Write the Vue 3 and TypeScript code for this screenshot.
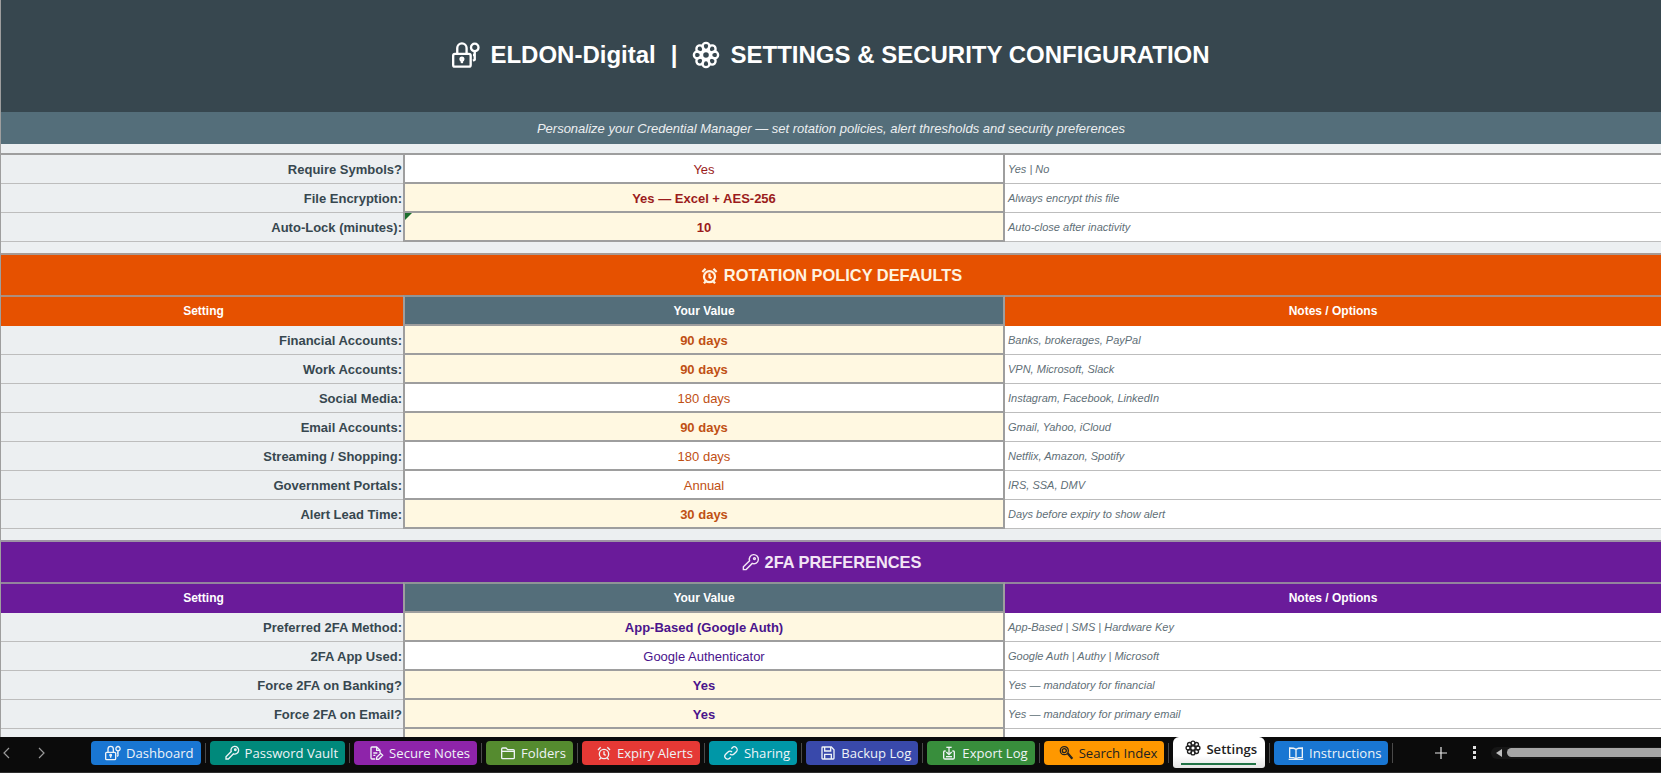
<template>
  <div class="app">
    <div class="sheet">
      <header class="title-bar">
        <svg class="title-icon" viewBox="0 0 24 24"><path v-for="d in icons.lockKey" :key="d" :d="d" /></svg>
        <span>ELDON-Digital</span>
        <span class="pipe">|</span>
        <svg class="title-icon" viewBox="0 0 24 24"><path v-for="d in icons.gear" :key="d" :d="d" /></svg>
        <span>SETTINGS &amp; SECURITY CONFIGURATION</span>
      </header>
      <div class="sub-bar">Personalize your Credential Manager — set rotation policies, alert thresholds and security preferences</div>

      <section v-for="section in sections" :key="section.id" class="section" :class="section.id">
        <div v-if="section.title" class="banner">
          <svg class="banner-icon" viewBox="0 0 24 24"><path v-for="d in icons[section.icon]" :key="d" :d="d" /></svg>
          <span>{{ section.title }}</span>
        </div>
        <div v-if="section.title" class="row head">
          <div class="cell">Setting</div>
          <div class="cell mid">Your Value</div>
          <div class="cell">Notes / Options</div>
        </div>
        <div v-for="row in section.rows" :key="row.label" class="row">
          <div class="cell label">{{ row.label }}</div>
          <div class="cell value" :class="{ filled: row.filled }">
            <i v-if="row.comment" class="comment"></i>{{ row.value }}
          </div>
          <div class="cell note">{{ row.note }}</div>
        </div>
      </section>
    </div>

    <footer class="tabs">
      <svg class="nav first" viewBox="0 0 10 14"><path d="M7 2 2 7l5 5" /></svg>
      <svg class="nav" viewBox="0 0 10 14"><path d="M3 2l5 5-5 5" /></svg>
      <div class="tab-list">
        <template v-for="tab in tabs" :key="tab.name">
          <div class="tab" :class="[tab.cls, { active: tab.active }]">
            <svg class="tab-icon" viewBox="0 0 24 24"><path v-for="d in icons[tab.icon]" :key="d" :d="d" /></svg>
            <span>{{ tab.name }}</span>
          </div>
          <i class="sep"></i>
        </template>
      </div>
      <svg class="plus" viewBox="0 0 14 14"><path d="M7 1v12M1 7h12" /></svg>
      <div class="kebab"><i></i><i></i><i></i></div>
      <div class="scroller">
        <b></b>
        <span></span>
      </div>
    </footer>
  </div>
</template>

<script setup lang="ts">
interface Row {
  label: string
  value: string
  note: string
  filled?: boolean
  comment?: boolean
}

// draws a circle as a path so every icon is just a list of d strings
const ring = (cx: number, cy: number, r: number) =>
  `M${cx - r} ${cy}a${r} ${r} 0 1 0 ${r * 2} 0a${r} ${r} 0 1 0 ${-r * 2} 0`

const petals = [0, 45, 90, 135, 180, 225, 270, 315].map((deg) => {
  const a = (deg * Math.PI) / 180
  return ring(+(12 + 7.4 * Math.cos(a)).toFixed(2), +(12 + 7.4 * Math.sin(a)).toFixed(2), 3)
})

const icons: Record<string, string[]> = {
  lockKey: [
    'M2.500 11h12a1.500 1.500 0 0 1 1.500 1.500v8a1.500 1.500 0 0 1-1.500 1.500h-12a1.500 1.500 0 0 1-1.500-1.500v-8A1.500 1.500 0 0 1 2.500 11z',
    'M4.500 11V6a4 4 0 0 1 8 0v5',
    ring(8.500, 15.500, 1.2),
    'M8.500 16.500v2.500',
    ring(19.500, 5.500, 3.200),
    'M19.500 8.700v7.300l-1.500 1M19.500 12H18',
  ],
  gear: [...petals, ring(12, 12, 3.400)],
  alarm: [
    ring(12, 13.500, 7),
    'M12 9.500v4.500l2.500 1.500',
    'M3 7.500 7 3.500',
    'M21 7.500 17 3.500',
    'M7 19.500 5 22',
    'M17 19.500l2 2.500',
  ],
  key: [
    'M10.800 9.800A5.760 5.760 0 1 1 14.200 13.200L6.500 21H3V17.500Z',
    ring(17, 7, 1.200),
  ],
  note: [
    'M11 21H6a1.500 1.500 0 0 1-1.500-1.500v-15A1.500 1.500 0 0 1 6 3h7l5 5v4',
    'M13 3v5h5',
    'M8 12h6M8 15.500h3',
    'M13 21.500v-3l6-6 3 3-6 6z',
  ],
  folder: [
    'M2.500 19V6a1.500 1.500 0 0 1 1.500-1.500h5L11.500 7H20a1.500 1.500 0 0 1 1.500 1.500V19a1.500 1.500 0 0 1-1.500 1.500H4A1.500 1.500 0 0 1 2.500 19z',
    'M2.500 9.500h19',
  ],
  link: [
    'M10.500 13.500a4 4 0 0 0 6 0l3.500-3.500a4.200 4.200 0 0 0-6-6l-1.500 1.500',
    'M13.500 10.500a4 4 0 0 0-6 0L4 14a4.200 4.200 0 0 0 6 6l1.500-1.500',
  ],
  floppy: [
    'M4 3h13l4 4v13a1 1 0 0 1-1 1H4a1 1 0 0 1-1-1V4a1 1 0 0 1 1-1z',
    'M7 3v6h9V3',
    'M7 21v-7h10v7',
  ],
  tray: [
    'M7 9H5.500A1.500 1.500 0 0 0 4 10.500V19a2 2 0 0 0 2 2h12a2 2 0 0 0 2-2v-8.500A1.500 1.500 0 0 0 18.500 9H17',
    'M12 3v11',
    'M8 10.500l4 4 4-4',
    'M8 3.500h8',
    'M7.500 17.500h9',
  ],
  search: [ring(9.500, 8.500, 6), ring(9.500, 8.500, 3), 'M14 13l7 8', 'M15 12l7 8'],
  book: [
    'M12 6.500C10 5 7 4.500 2.500 4.500V18.500C7 18.500 10 19 12 20.500C14 19 17 18.500 21.500 18.500V4.500C17 4.500 14 5 12 6.500z',
    'M12 6.500v14',
    'M1 21.500h22',
  ],
}

const sections: { id: string; title?: string; icon: string; rows: Row[] }[] = [
  {
    id: 'top',
    icon: '',
    rows: [
      { label: 'Require Symbols?', value: 'Yes', note: 'Yes | No' },
      { label: 'File Encryption:', value: 'Yes — Excel + AES-256', note: 'Always encrypt this file', filled: true },
      { label: 'Auto-Lock (minutes):', value: '10', note: 'Auto-close after inactivity', filled: true, comment: true },
    ],
  },
  {
    id: 'rotation',
    title: 'ROTATION POLICY DEFAULTS',
    icon: 'alarm',
    rows: [
      { label: 'Financial Accounts:', value: '90 days', note: 'Banks, brokerages, PayPal', filled: true },
      { label: 'Work Accounts:', value: '90 days', note: 'VPN, Microsoft, Slack', filled: true },
      { label: 'Social Media:', value: '180 days', note: 'Instagram, Facebook, LinkedIn' },
      { label: 'Email Accounts:', value: '90 days', note: 'Gmail, Yahoo, iCloud', filled: true },
      { label: 'Streaming / Shopping:', value: '180 days', note: 'Netflix, Amazon, Spotify' },
      { label: 'Government Portals:', value: 'Annual', note: 'IRS, SSA, DMV' },
      { label: 'Alert Lead Time:', value: '30 days', note: 'Days before expiry to show alert', filled: true },
    ],
  },
  {
    id: 'twofa',
    title: '2FA PREFERENCES',
    icon: 'key',
    rows: [
      { label: 'Preferred 2FA Method:', value: 'App-Based (Google Auth)', note: 'App-Based | SMS | Hardware Key', filled: true },
      { label: '2FA App Used:', value: 'Google Authenticator', note: 'Google Auth | Authy | Microsoft' },
      { label: 'Force 2FA on Banking?', value: 'Yes', note: 'Yes — mandatory for financial', filled: true },
      { label: 'Force 2FA on Email?', value: 'Yes', note: 'Yes — mandatory for primary email', filled: true },
      { label: '', value: '', note: '', filled: true },
    ],
  },
]

const tabs = [
  { name: 'Dashboard', icon: 'lockKey', cls: 'blue' },
  { name: 'Password Vault', icon: 'key', cls: 'teal' },
  { name: 'Secure Notes', icon: 'note', cls: 'purple' },
  { name: 'Folders', icon: 'folder', cls: 'green' },
  { name: 'Expiry Alerts', icon: 'alarm', cls: 'red' },
  { name: 'Sharing', icon: 'link', cls: 'cyan' },
  { name: 'Backup Log', icon: 'floppy', cls: 'indigo' },
  { name: 'Export Log', icon: 'tray', cls: 'emerald' },
  { name: 'Search Index', icon: 'search', cls: 'amber' },
  { name: 'Settings', icon: 'gear', cls: 'settings', active: true },
  { name: 'Instructions', icon: 'book', cls: 'blue' },
]
</script>

<style>
html,
body {
  margin: 0;
  background: #000;
}
</style>

<style scoped>
.app {
  display: flex;
  flex-direction: column;
  height: 773px;
  overflow: hidden;
  font-family: "Liberation Sans", Arial, sans-serif;
}

.sheet {
  flex: 1;
  min-height: 0;
  overflow: hidden;
  background: #eceff1;
  border-left: 1px solid #9e9e9e;
}

.title-bar {
  display: flex;
  align-items: center;
  justify-content: center;
  gap: 10px;
  height: 110px;
  padding-bottom: 2px;
  background: #37474f;
  color: #fff;
  font-size: 24px;
  font-weight: 700;
}

.title-icon {
  width: 28px;
  height: 28px;
  fill: none;
  stroke: #fff;
  stroke-width: 2;
}

.pipe {
  margin: 0 5px;
}

.sub-bar {
  display: flex;
  align-items: center;
  justify-content: center;
  height: 32px;
  background: #546e7a;
  color: #eceff1;
  font-size: 13px;
  font-style: italic;
}

.section {
  margin-top: 11px;
}

.section.top {
  margin-top: 9px;
  border-top: 2px solid #9e9e9e;
}

.banner {
  display: flex;
  align-items: center;
  justify-content: center;
  gap: 5px;
  box-sizing: border-box;
  height: 42px;
  border-top: 2px solid #a79a94;
  font-size: 16.4px;
  font-weight: 700;
}

.banner-icon {
  width: 19px;
  height: 19px;
  fill: none;
  stroke: currentColor;
  stroke-width: 2.8;
}

.rotation .banner {
  background: #e65100;
  color: #fff3e0;
}

.twofa .banner {
  background: #6a1b9a;
  color: #f3e5f5;
  border-top-color: #9e93a5;
}

.twofa .banner-icon {
  stroke-width: 1.8;
}

.row {
  display: grid;
  grid-template-columns: 402px 602px 1fr;
  height: 29px;
  font-size: 13px;
}

.cell {
  display: flex;
  align-items: center;
  min-width: 0;
  white-space: nowrap;
  box-sizing: border-box;
  border-bottom: 1px solid #bdbdbd;
}

.row.head {
  height: 31px;
  color: #fff;
  font-size: 12px;
  font-weight: 700;
}

.head .cell {
  justify-content: center;
  border-top: 2px solid rgba(158, 158, 158, 0.8);
  border-bottom: 2px solid transparent;
}

.head .cell:first-child {
  padding-left: 3px;
}

.rotation .head .cell {
  background: #e65100;
}

.twofa .head .cell {
  background: #6a1b9a;
}

.section .head .mid {
  background: #546e7a;
  border-bottom: 2px solid #9e9e9e;
  border-right: 2px solid #9e9e9e;
  border-left: 2px solid #9e9e9e;
}

.label {
  justify-content: flex-end;
  padding-right: 1px;
  background: #eceff1;
  color: #37474f;
  font-weight: 700;
}

.value {
  position: relative;
  justify-content: center;
  padding-top: 1px;
  background: #fff;
  border-left: 2px solid #9e9e9e;
  border-right: 2px solid #9e9e9e;
  border-bottom: 2px solid #9e9e9e;
}

.value.filled {
  background: #fff8e1;
  font-weight: 700;
}

.top .value {
  color: #9b1c1c;
}

.rotation .value {
  color: #bf5014;
}

.twofa .value {
  color: #4a148c;
}

.comment {
  position: absolute;
  top: 0;
  left: 0;
  border-top: 7px solid #1b6e2c;
  border-right: 7px solid transparent;
}

.note {
  padding-left: 3px;
  background: #fff;
  color: #5f6f77;
  font-size: 11px;
  font-style: italic;
}

.tabs {
  display: flex;
  align-items: center;
  flex: none;
  height: 36px;
  box-sizing: border-box;
  padding-bottom: 4px;
  background: #0b0b0b;
  border-bottom: 1px solid #2e2e2e;
}

.nav {
  width: 10px;
  height: 14px;
  margin-left: 24px;
  fill: none;
  stroke: #9a9a9a;
  stroke-width: 1.2;
}

.nav.first {
  margin-left: 2px;
}

.tab-list {
  display: flex;
  align-items: flex-start;
  align-self: flex-start;
  margin-left: 45px;
}

.tab {
  display: flex;
  align-items: center;
  gap: 5px;
  height: 24px;
  margin-top: 4px;
  padding: 0 7px 0 14px;
  border-radius: 4px;
  color: #eef3f7;
  font-family: "Open Sans", "Noto Sans", sans-serif;
  font-size: 13.1px;
}

.tab-icon {
  flex: none;
  width: 16px;
  height: 16px;
  fill: none;
  stroke: currentColor;
  stroke-width: 2;
}

.sep {
  flex: none;
  width: 1px;
  height: 20px;
  margin: 6px 4px 0;
  background: #4a4a4a;
}

.blue { background: #1976d2; }
.teal { background: #00897b; }
.purple { background: #8e24aa; }
.green { background: #558b2f; }
.red { background: #e53935; }
.cyan { background: #0097a7; }
.indigo { background: #3949ab; }
.emerald { background: #388e3c; }

.amber {
  background: #ff9800;
  color: #222;
}

.settings {
  position: relative;
  align-items: flex-start;
  height: 28px;
  padding: 3px 8px 0 12px;
  margin-top: 0;
  background: linear-gradient(#fff 60%, #e4e4e4);
  border-radius: 6px 6px 3px 3px;
  color: #222;
  font-weight: 600;
}

.settings::after {
  content: "";
  position: absolute;
  left: 8px;
  right: 9px;
  bottom: 3px;
  height: 2px;
  background: #217346;
}

.plus {
  width: 14px;
  height: 14px;
  margin-left: 37px;
  fill: none;
  stroke: #e8e8e8;
  stroke-width: 1.2;
}

.kebab {
  display: flex;
  flex-direction: column;
  gap: 2px;
  margin-left: 25px;
}

.kebab i {
  width: 3px;
  height: 3px;
  background: #e0e0e0;
}

.scroller {
  display: flex;
  flex: 1;
  align-items: center;
  gap: 5px;
  height: 12px;
  margin-left: 15px;
  padding-left: 5px;
  background: #161616;
  border-radius: 6px 0 0 6px;
}

.scroller b {
  border-top: 4px solid transparent;
  border-bottom: 4px solid transparent;
  border-right: 6px solid #bdbdbd;
}

.scroller span {
  flex: 1;
  height: 9px;
  background: #a6a6a6;
  border-radius: 5px 0 0 5px;
}
</style>
